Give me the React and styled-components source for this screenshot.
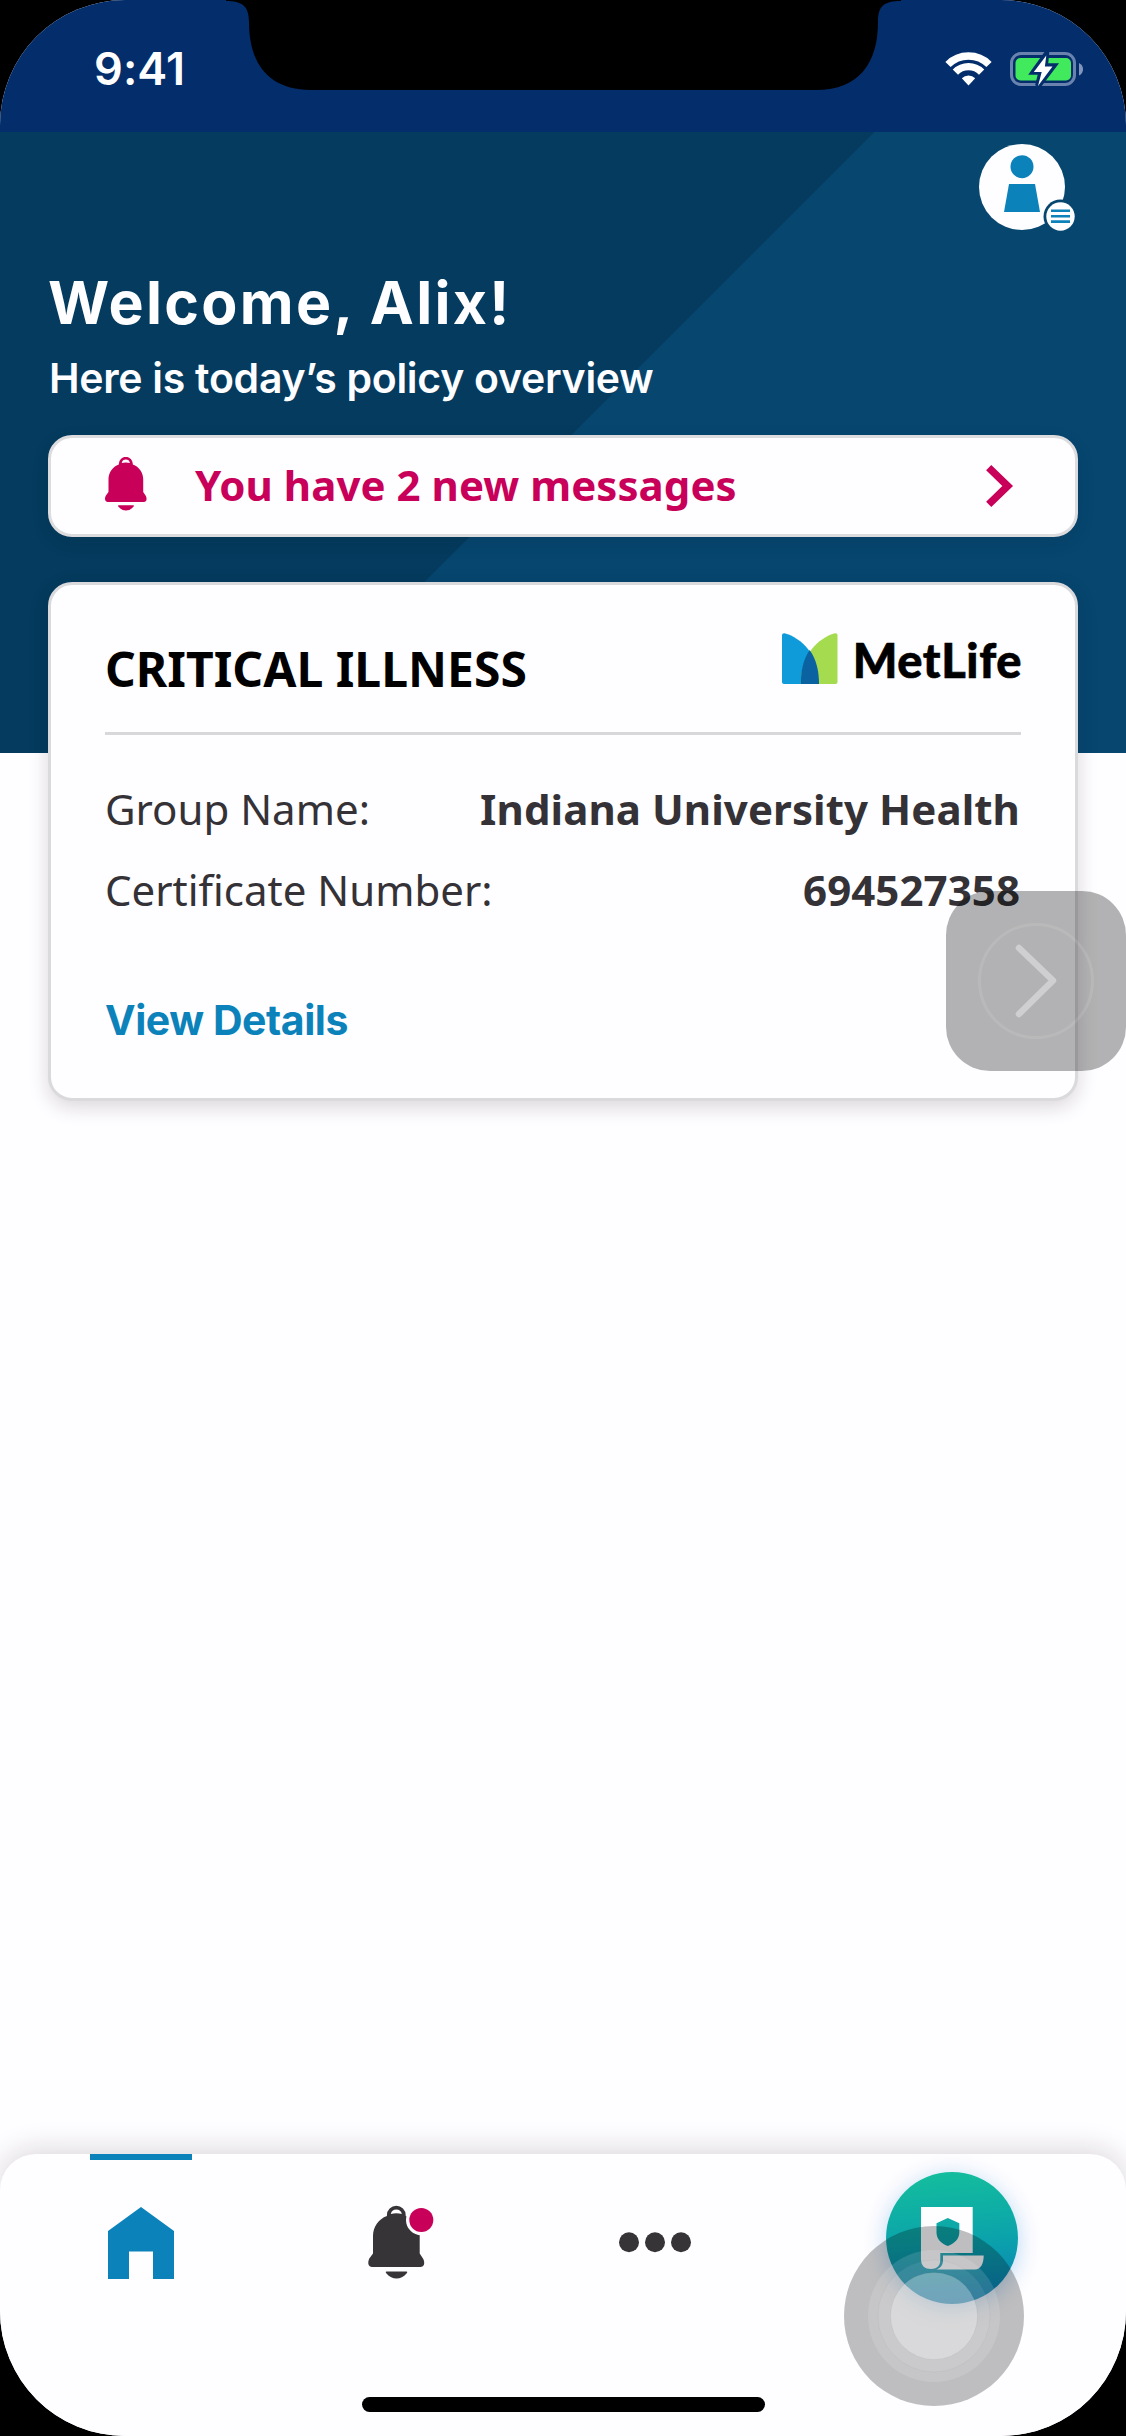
import React from 'react';
import styled, { createGlobalStyle } from 'styled-components';

const GlobalStyle = createGlobalStyle`
  * { box-sizing: border-box; }
  body { margin: 0; background: #000; }
  h1, h2, p { margin: 0; }
  button { border: 0; padding: 0; background: none; font: inherit; color: inherit; }
  svg { display: block; flex: none; }
`;

const brand = "Inter, 'Liberation Sans', sans-serif";
const body = "'Noto Sans', 'Open Sans', sans-serif";

const Screen = styled.div`
  position: relative;
  display: flex;
  flex-direction: column;
  width: 1126px;
  height: 2436px;
  overflow: hidden;
  border-radius: 125px;
  background: #fefdff;
  font-family: ${body};
`;

const StatusBar = styled.div`
  display: flex;
  flex: none;
  align-items: center;
  justify-content: space-between;
  height: 132px;
  padding: 5px 43px 0 94px;
  background: #042e6b;
  color: #fff;
`;

const Time = styled.span`
  font: 600 45px/54px ${brand};
  letter-spacing: 0.1px;
`;

const StatusIcons = styled.div`
  display: flex;
  align-items: center;
  gap: 18px;
`;

const Notch = styled.svg`
  position: absolute;
  top: 0;
  left: 226px;
`;

const Hero = styled.header`
  flex: none;
  height: 621px;
  padding: 12px 48px 0;
  background: linear-gradient(135deg, #043b5e 618px, #06466f 618.8px);
  color: #fefdff;
`;

const ProfileRow = styled.div`
  display: flex;
  justify-content: flex-end;
  height: 88px;
  padding-right: 2px;
`;

const Title = styled.h1`
  margin-top: 35px;
  font: 700 59px/72px ${brand};
  letter-spacing: ${(p) => p.$tracking};
  white-space: nowrap;
`;

const Subtitle = styled.p`
  margin: 11px 0 0 1px;
  font: 600 41px/56px ${brand};
  letter-spacing: ${(p) => p.$tracking};
  white-space: nowrap;
`;

const MessageBar = styled.button`
  display: flex;
  align-items: center;
  width: 100%;
  height: 102px;
  margin-top: 29px;
  padding: 0 61px 0 54px;
  border: 3px solid #dcdbde;
  border-radius: 24px;
  background: #fefdff;
  box-shadow: 0 6px 18px rgba(30, 20, 30, 0.1);
  color: #c8005a;
`;

const MessageText = styled.span`
  flex: 1;
  margin: 0 0 3px 48px;
  text-align: left;
  font: 700 42px/56px ${body};
  letter-spacing: 0.05px;
`;

const Card = styled.section`
  flex: none;
  height: 519px;
  margin: -171px 48px 0;
  padding: 48px 54px 0;
  border: 3px solid #dad9dc;
  border-radius: 24px;
  background: #fefdff;
  box-shadow: 0 6px 20px rgba(30, 20, 30, 0.16);
`;

const CardHeader = styled.div`
  display: flex;
  align-items: flex-start;
  justify-content: space-between;
  height: 102px;
  border-bottom: 3px solid #d8d7da;
`;

const CardTitle = styled.h2`
  margin-top: 4px;
  color: #000;
  font: 700 48px/64px ${body};
`;

const Logo = styled.div`
  display: flex;
  align-items: center;
  gap: 15px;
  height: 51px;
  color: #000;
`;

const LogoName = styled.span`
  margin: 3px -1px 0 0;
  font: 900 47px/51px Lato, ${body};
  letter-spacing: 0.6px;
  -webkit-text-stroke: 0.6px #000;
`;

const Details = styled.div`
  display: flex;
  flex-direction: column;
  gap: 21px;
  padding-top: 44px;
`;

const DetailRow = styled.div`
  display: flex;
  justify-content: space-between;
  height: 60px;
  color: #343236;
  font-size: 42px;
  line-height: 60px;
`;

const Value = styled.span`
  padding-right: 1px;
  font-weight: 700;
  letter-spacing: 0.08px;
`;

const DetailsLink = styled.button`
  display: block;
  margin-top: 75px;
  color: #0c82ba;
  font: 700 41px/50px ${brand};
  letter-spacing: ${(p) => p.$tracking};
`;

const TabBar = styled.nav`
  display: grid;
  flex: none;
  grid-template-columns: repeat(3, 257px) 1fr;
  align-content: start;
  height: 282px;
  margin-top: auto;
  padding-left: 12px;
  border-radius: 36px 36px 0 0;
  background: #fefdff;
  box-shadow: 0 -4px 30px rgba(30, 20, 30, 0.16);
`;

const Tab = styled.button`
  position: relative;
  display: flex;
  align-items: center;
  justify-content: center;
  height: 177px;

  &::before {
    content: '';
    position: absolute;
    top: 0;
    left: 78px;
    width: 102px;
    height: 6px;
    background: ${(p) => (p.$active ? '#0c82ba' : 'transparent')};
  }
`;

const PolicyButton = styled.button`
  display: flex;
  align-items: center;
  justify-content: center;
  width: 132px;
  height: 132px;
  margin: 18px 0 0 103px;
  border-radius: 50%;
  background: linear-gradient(175deg, #14bf9c 0%, #0ba3ab 52%, #0a7cb8 100%);
  box-shadow: 0 4px 22px rgba(20, 130, 215, 0.3);
`;

const HomeIndicator = styled.div`
  position: absolute;
  bottom: 24px;
  left: 362px;
  width: 403px;
  height: 15px;
  border-radius: 8px;
  background: #000;
`;

const EdgeHandle = styled.div`
  position: absolute;
  top: 891px;
  right: 0;
  width: 180px;
  height: 180px;
  border-radius: 44px;
  background: rgba(0, 0, 0, 0.298);
`;

const TouchPoint = styled.svg`
  position: absolute;
  left: 844px;
  top: 2226px;
`;

function Wifi() {
  return (
    <svg width="47" height="34" viewBox="0 0 47 34" fill="none" stroke="#fff">
      <path d="M3 12.5A29 29 0 0 1 44 12.5" strokeWidth="7.4" />
      <path d="M10.4 20.1A18.5 18.5 0 0 1 36.6 20.1" strokeWidth="7.4" />
      <path d="M23.5 33.5L16.8 26.2A10 10 0 0 1 30.2 26.2Z" fill="#fff" stroke="none" />
    </svg>
  );
}

function Battery() {
  return (
    <svg width="73" height="38" viewBox="0 0 73 38">
      <rect x="1.5" y="3.5" width="63" height="31" rx="9.5" fill="none" stroke="#6a83ae" strokeWidth="3" />
      <path d="M69 13Q73 15 73 19.2Q73 23.5 69 25.5Z" fill="#8296bc" />
      <rect x="5.5" y="8" width="55.5" height="22.5" rx="5" fill="#40ea5c" />
      <path d="M36 5L24 21.8H31.5L28 36L43 16.2H35Z" fill="#042e6b" stroke="#042e6b" strokeWidth="6" />
      <path d="M36.3 5.5L23.8 22H31.7L28 36L42.5 16.5H34.9Z" fill="#fff" />
    </svg>
  );
}

function Avatar() {
  return (
    <svg width="97" height="88" viewBox="0 0 97 88">
      <circle cx="43" cy="43" r="43" fill="#fefdff" />
      <circle cx="43" cy="22.7" r="11.5" fill="#0c82ba" />
      <path d="M30 40H56L61 68H25Z" fill="#0c82ba" />
      <circle cx="81.5" cy="72.5" r="17" fill="#06466f" />
      <circle cx="81.5" cy="72.5" r="14.2" fill="#fefdff" />
      <path d="M72 66.8H91M72 72.3H91M72 77.6H91" stroke="#0c82ba" strokeWidth="2.6" />
    </svg>
  );
}

const bellShape =
  'M26.9 11V10.2A9.4 9.4 0 0 1 45.7 10.2V11C54.2 14 59.7 22 59.7 31V48.5L63.3 54C65.5 59 63.5 62 60.5 62H12C8.5 62 7.2 58 9.3 53.5L13 48.5V31C13 22 18.5 14 26.9 11ZM30.8 9Q36.3 7.6 41.8 9A5.6 5.6 0 0 0 30.8 9Z';
const clapperShape = 'M26.5 66.5H46.5Q48 66.5 46.5 68.5C41 75.2 32 75.2 26.5 68.5Q25 66.5 26.5 66.5Z';

const AlertBellIcon = styled.svg`
  margin-bottom: 5px;
`;

function AlertBell() {
  return (
    <AlertBellIcon width="42" height="54" viewBox="8.3 1 56.5 73.2" fill="#c8005a" preserveAspectRatio="none">
      <path d={bellShape} fillRule="evenodd" />
      <path d={clapperShape} />
    </AlertBellIcon>
  );
}

function TabBell() {
  return (
    <svg width="75" height="75" viewBox="0 0 75 75" fill="#363437">
      <path d={bellShape} fillRule="evenodd" />
      <path d={clapperShape} />
      <circle cx="61.3" cy="15" r="15.3" fill="#fefdff" />
      <circle cx="61.3" cy="15" r="12" fill="#c8005a" />
    </svg>
  );
}

function Chevron() {
  return (
    <svg width="28" height="42" viewBox="0 0 28 42" fill="none" stroke="#c8005a" strokeWidth="7.4">
      <path d="M2.7 2.7L21.7 21L2.7 39.3" />
    </svg>
  );
}

function LogoMark() {
  return (
    <svg width="56" height="51" viewBox="0 0 56 51">
      <path d="M0 2Q0 0 2.5 0.2C20 5 37 22 37 51H2Q0 51 0 49Z" fill="#0f9bd9" />
      <path d="M55.5 2Q55.5 0 53 0.2C36 5 18.8 22 18.8 51H53.5Q55.5 51 55.5 49Z" fill="#a5db4f" />
      <path d="M27.7 17C34 26 37 37 37 51H18.8C18.8 37 21.5 26 27.7 17Z" fill="#0a63a0" />
    </svg>
  );
}

function Home() {
  return (
    <svg width="66" height="72" viewBox="0 0 66 72">
      <path d="M33 0L66 24V72H45V44.5H21V72H0V24Z" fill="#0c82ba" />
    </svg>
  );
}

function More() {
  return (
    <svg width="72" height="21" viewBox="0 0 72 21" fill="#363437">
      <circle cx="10" cy="10.3" r="10" />
      <circle cx="36" cy="10.3" r="10" />
      <circle cx="62" cy="10.3" r="10" />
    </svg>
  );
}

function Policy() {
  return (
    <svg width="63" height="63" viewBox="0 0 63 63">
      <path
        d="M0 0H51.7V46H19.3V53C19.3 59 15.5 62 10 62C4 62 0 59 0 52ZM26.8 11L15.5 16.2V25.5C15.5 32 20 36.5 26.8 39C33.5 36.5 38.3 32 38.3 25.5V16.2Z"
        fill="#fefdff"
        fillRule="evenodd"
      />
      <path d="M22 48.5H62.7C62.7 57 59.5 62.5 54 62.5H15.5C20 60.5 22 58 22 53Z" fill="#fefdff" />
    </svg>
  );
}

const details = [
  { label: 'Group Name:', value: 'Indiana University Health' },
  { label: 'Certificate Number:', value: '694527358' },
];

export default function App() {
  return (
    <>
      <GlobalStyle />
      <Screen>
        <StatusBar>
          <Time>9:41</Time>
          <StatusIcons>
            <Wifi />
            <Battery />
          </StatusIcons>
        </StatusBar>
        <Hero>
          <ProfileRow>
            <Avatar />
          </ProfileRow>
          <Title $tracking="2.3px">Welcome, Alix!</Title>
          <Subtitle $tracking="-0.28px">Here is today’s policy overview</Subtitle>
          <MessageBar>
            <AlertBell />
            <MessageText>You have 2 new messages</MessageText>
            <Chevron />
          </MessageBar>
        </Hero>
        <Card>
          <CardHeader>
            <CardTitle>CRITICAL ILLNESS</CardTitle>
            <Logo>
              <LogoMark />
              <LogoName>MetLife</LogoName>
            </Logo>
          </CardHeader>
          <Details>
            {details.map((d) => (
              <DetailRow key={d.label}>
                <span>{d.label}</span>
                <Value>{d.value}</Value>
              </DetailRow>
            ))}
          </Details>
          <DetailsLink $tracking="-0.45px">View Details</DetailsLink>
        </Card>
        <TabBar>
          <Tab $active>
            <Home />
          </Tab>
          <Tab>
            <TabBell />
          </Tab>
          <Tab>
            <More />
          </Tab>
          <PolicyButton>
            <Policy />
          </PolicyButton>
        </TabBar>
        <HomeIndicator />
        <Notch width="675" height="90" viewBox="226 0 675 90">
          <path d="M226 0V1C242 1 249 6 249 22C249 62 267 90 311 90H816C860 90 878 62 878 22C878 6 884 1 901 1V0Z" />
        </Notch>
        <EdgeHandle>
          <svg width="180" height="180" viewBox="0 0 180 180" fill="none">
            <circle cx="90" cy="90" r="56.5" stroke="#fff" strokeOpacity="0.1" strokeWidth="3" />
            <path
              d="M73 57L107 89.5L73 123"
              stroke="#cfced0"
              strokeWidth="6.5"
              strokeLinecap="round"
              strokeLinejoin="round"
            />
          </svg>
        </EdgeHandle>
        <TouchPoint width="180" height="180" viewBox="0 0 180 180">
          <circle cx="90" cy="90" r="90" fill="#000" fillOpacity="0.25" />
          <circle cx="90" cy="90" r="66" fill="#fff" fillOpacity="0.13" />
          <circle cx="90" cy="90" r="56" fill="#fff" fillOpacity="0.08" stroke="#000" strokeOpacity="0.03" />
          <circle cx="90" cy="90" r="43.5" fill="#fff" fillOpacity="0.29" stroke="#000" strokeOpacity="0.04" />
        </TouchPoint>
      </Screen>
    </>
  );
}
